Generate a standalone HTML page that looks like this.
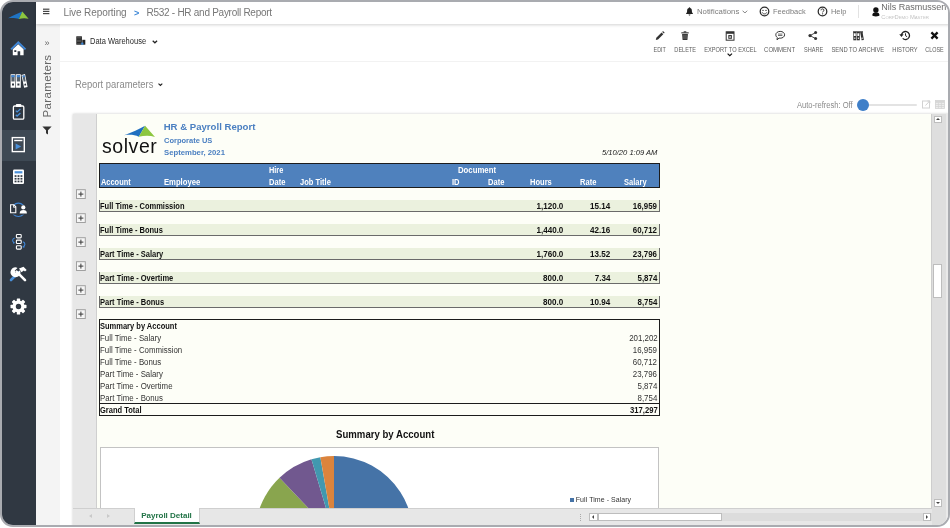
<!DOCTYPE html>
<html lang="en">
<head>
<meta charset="utf-8">
<title>R532 - HR and Payroll Report</title>
<style>
*{box-sizing:border-box;margin:0;padding:0}
html,body{width:950px;height:528px;overflow:hidden;background:#fff}
body{font-family:"Liberation Sans",sans-serif;color:#333;position:relative}
.abs{position:absolute}
#frame{position:absolute;left:0;top:0;width:950px;height:527px;border:2px solid #a9abb0;border-radius:13px;overflow:hidden;background:#fff}
#inner{position:absolute;left:-2px;top:-2px;width:950px;height:528px;will-change:transform}
/* sidebar */
#side{position:absolute;left:0;top:0;width:36px;height:528px;background:#303842}
#side .sel{position:absolute;left:0;top:130px;width:36px;height:31px;background:#3e4954}
#side svg{position:absolute;left:0;top:0}
/* top bar */
#top{position:absolute;left:36px;top:0;width:914px;height:24px;background:#fff;box-shadow:0 1px 3px rgba(0,0,0,.18);z-index:5}
#top .crumb{position:absolute;top:6.200px;font-size:10px;color:#777;white-space:nowrap;line-height:14px}
#params{position:absolute;left:36px;top:24px;width:24px;height:504px;background:#f4f4f4}
#main{position:absolute;left:60px;top:24px;width:890px;height:504px;background:#fff}
.tb{position:absolute;font-size:6.8px;color:#5c5c5c;white-space:nowrap;text-align:center;line-height:8px;top:22px}
.tb span{display:inline-block;transform:scaleX(.825);transform-origin:center center !important}
/* report */
#gutter{position:absolute;left:73px;top:114px;width:24px;height:394px;background:#e7e7e7}
#sheet{position:absolute;left:97px;top:114px;width:834.300px;height:394px;background:#fdfef7;overflow:hidden}
#vscroll{position:absolute;left:931.300px;top:114px;width:17px;height:413px;background:#dedede}
#tabs{position:absolute;left:73px;top:508px;width:859px;height:19px;background:#e7e7e7}
.r{position:absolute;font-size:9px;line-height:12px;white-space:nowrap;color:#111}
.tt{position:absolute;top:7px;font-size:8px;line-height:10px;color:#7c7c7c;white-space:nowrap}
.tt span,.tb span,.r span{display:inline-block;transform-origin:left center}
.r span{white-space:nowrap}
.sbtn{position:absolute;background:#fff;border:1px solid #bdbdbd}
.sbtn i{position:absolute;width:0;height:0;border-style:solid}
</style>
</head>
<body>
<div id="frame"><div id="inner">

<div id="side">
  <div class="sel"></div>
  <svg width="36" height="528" viewBox="0 0 36 528">
    <!-- logo -->
    <path d="M8 18.200C13 15.500 18 13.500 22.300 11.500L18.900 19C15.500 17.800 11.500 17.800 8 18.200z" fill="#1f74c4"/>
    <path d="M22.300 11.500L28.600 18.700C25.500 17.900 22 18 18.900 19z" fill="#8cc63f"/>
    <!-- home -->
    <path d="M10.400 48.700L18.300 41L26.200 48.700L24.900 50L18.300 43.700L11.700 50z" fill="#3f86d6"/>
    <path d="M12.800 49.300L18.200 44.300L23.600 49.300V55.200H20.200V51.300H17.600V55.200H12.800z" fill="#fff"/>
    <rect x="14.300" y="50.200" width="2" height="1.800" fill="#303842"/>
    <!-- binders -->
    <g fill="#fff">
      <rect x="10.600" y="74.200" width="4.800" height="13.600" rx=".4"/>
      <rect x="16" y="74.200" width="4.800" height="13.600" rx=".4"/>
      <path d="M21.500 74.900l3.500-.8 2.600 12.900-3.500.8z"/>
    </g>
    <g fill="#56616c">
      <rect x="11.400" y="75.200" width="3.200" height="6.300"/>
      <rect x="16.800" y="75.200" width="3.200" height="6.300"/>
      <path d="M22.500 75.700l2-.5 1.200 6-2 .5z"/>
    </g>
    <g fill="#303842">
      <rect x="12" y="83.500" width="2" height="2"/>
      <rect x="17.400" y="83.500" width="2" height="2"/>
      <path d="M24.300 83.900l1.600-.4.400 1.800-1.600.4z"/>
    </g>
    <rect x="11.400" y="75.200" width="3.200" height="2" fill="#3f86d6"/>
    <rect x="16.800" y="75.200" width="3.200" height="2" fill="#3f86d6"/>
    <path d="M22.500 75.700l2-.5.400 1.900-2 .5z" fill="#3f86d6"/>
    <!-- clipboard -->
    <rect x="13.400" y="106" width="10.400" height="13.200" rx="1.200" fill="none" stroke="#fff" stroke-width="1.300"/>
    <rect x="15.800" y="104" width="5.600" height="3" rx="1" fill="#fff"/>
    <path d="M15.800 110.600l1.300 1.300 3.300-3M15.800 114.800l1.300 1.300 3.300-3" fill="none" stroke="#4a90d9" stroke-width="1.300"/>
    <!-- report play -->
    <rect x="12.300" y="137.600" width="12" height="14" fill="none" stroke="#fff" stroke-width="1.400"/>
    <rect x="14.200" y="139.800" width="8.200" height="1.400" fill="#fff"/>
    <path d="M15.600 143.500l5.600 3-5.600 3z" fill="#4a90d9"/>
    <!-- calculator -->
    <rect x="13" y="169.500" width="11" height="14.400" rx="1.200" fill="#fff"/>
    <rect x="14.600" y="171.200" width="7.800" height="2.200" fill="#4a90d9"/>
    <g fill="#303842">
      <rect x="14.600" y="175.200" width="1.900" height="1.700"/><rect x="17.550" y="175.200" width="1.900" height="1.700"/><rect x="20.500" y="175.200" width="1.900" height="1.700"/>
      <rect x="14.600" y="177.900" width="1.900" height="1.700"/><rect x="17.550" y="177.900" width="1.900" height="1.700"/><rect x="20.500" y="177.900" width="1.900" height="1.700"/>
      <rect x="14.600" y="180.600" width="1.900" height="1.700"/><rect x="17.550" y="180.600" width="1.900" height="1.700"/><rect x="20.500" y="180.600" width="1.900" height="1.700"/>
    </g>
    <!-- doc + person -->
    <circle cx="18.400" cy="209.800" r="6.700" fill="none" stroke="#3f86d6" stroke-width="1.100"/>
    <rect x="9" y="205" width="8" height="9.600" fill="#303842"/>
    <rect x="18.800" y="205" width="9" height="9.600" fill="#303842"/>
    <path d="M10.600 204.800h3.200l2 2v6h-5.200z" fill="none" stroke="#fff" stroke-width="1.100"/>
    <path d="M13.500 205v2.300h2.300" fill="none" stroke="#fff" stroke-width=".8"/>
    <circle cx="23.300" cy="207.400" r="2.100" fill="#fff"/>
    <path d="M19.700 213.400c0-2.300 1.400-3.300 3.600-3.300s3.600 1 3.600 3.300z" fill="#fff"/>
    <!-- org -->
    <g fill="none" stroke="#fff" stroke-width="1.100">
      <rect x="16.400" y="234.500" width="4.800" height="3.400" rx=".8"/>
      <rect x="16.400" y="240.100" width="4.800" height="3.400" rx=".8"/>
      <rect x="16.400" y="245.700" width="4.800" height="3.400" rx=".8"/>
    </g>
    <path d="M14.800 238c-2.600.6-3 3.600-.6 4.800M22.800 241.800c2.800.8 2.800 4.200 0 5.200" fill="none" stroke="#3f86d6" stroke-width="1.100"/>
    <path d="M13.200 241.500l1.800 1.600-2 .6z" fill="#3f86d6"/>
    <path d="M24.200 245.600l-1.800 1.400 2 .9z" fill="#3f86d6"/>
    <!-- tools -->
    <path d="M11 280l7.500-7.500" stroke="#4a90d9" stroke-width="2.600" stroke-linecap="round"/>
    <path d="M25 280.200l-8.500-8.500" stroke="#fff" stroke-width="2.600" stroke-linecap="round"/>
    <path d="M10.500 270.200c1.200-2.600 4.200-3.600 6.500-2.300l-2.700 2.700.6 1.800 1.800.6 2.700-2.700c1.300 2.300.3 5.300-2.300 6.500-2.700 1.100-5.800-.300-6.800-2.800-.5-1.300-.4-2.600.2-3.800z" fill="#fff" transform="translate(.5 0)"/>
    <path d="M19 268.500l4.500-1.700 3.200 3.200-1.700 1.400-1.200-1-2.300 1.800z" fill="#fff"/>
    <!-- gear -->
    <g transform="translate(18.500 306.500)" fill="#fff">
      <g id="tth"><rect x="-1.700" y="-8" width="3.400" height="16" rx=".6"/></g>
      <rect x="-1.700" y="-8" width="3.400" height="16" rx=".6" transform="rotate(45)"/>
      <rect x="-1.700" y="-8" width="3.400" height="16" rx=".6" transform="rotate(90)"/>
      <rect x="-1.700" y="-8" width="3.400" height="16" rx=".6" transform="rotate(135)"/>
      <circle r="6"/>
      <circle r="2.700" fill="#303842"/>
    </g>
  </svg>
</div>


<div id="top">
  <svg class="abs" style="left:7px;top:8px" width="7" height="7" viewBox="0 0 7 7"><rect x="0" y="0.6" width="6.4" height="1.2" fill="#444"/><rect x="0" y="2.8" width="6.4" height="1.2" fill="#444"/><rect x="0" y="5" width="6.4" height="1.2" fill="#444"/></svg>
  <div class="crumb" style="left:27.5px;letter-spacing:-.1px">Live Reporting</div>
  <div class="crumb" style="left:98px;color:#3b86d6;font-weight:bold;font-size:9px">&gt;</div>
  <div class="crumb" style="left:110.5px;letter-spacing:-.27px">R532 - HR and Payroll Report</div>

  <svg class="abs" style="left:649px;top:7px" width="9" height="9" viewBox="0 0 9 9"><path d="M4.5 0.3c.5 0 .7.3.7.7 1.3.4 1.7 1.500 1.700 2.900 0 1.400.5 2 1.100 2.600v.5h-7v-.5c.6-.6 1.100-1.200 1.100-2.600 0-1.400.4-2.500 1.700-2.900 0-.4.200-.7.700-.7z" fill="#222"/><path d="M3.600 7.500h1.800c0 .6-.4 1-.9 1s-.9-.4-.9-1z" fill="#222"/></svg>
  <div class="tt" style="left:661px"><span style="transform:scaleX(.97)">Notifications</span></div>
  <svg class="abs" style="left:705.600px;top:10.300px" width="6" height="4" viewBox="0 0 6 4"><path d="M.6.700l2.300 2.300 2.300-2.300" fill="none" stroke="#777" stroke-width=".9"/></svg>

  <svg class="abs" style="left:723.300px;top:6px" width="11" height="11" viewBox="0 0 11 11"><circle cx="5.500" cy="5.500" r="4.300" fill="none" stroke="#2a2a2a" stroke-width="1.250"/><circle cx="4" cy="4.400" r=".7" fill="#333"/><circle cx="7" cy="4.400" r=".7" fill="#333"/><path d="M3.200 6.400c.5 1.100 1.300 1.500 2.300 1.500s1.800-.4 2.300-1.500" fill="none" stroke="#333" stroke-width=".9"/></svg>
  <div class="tt" style="left:737px"><span style="transform:scaleX(.93)">Feedback</span></div>

  <svg class="abs" style="left:780.500px;top:6px" width="11" height="11" viewBox="0 0 11 11"><circle cx="5.500" cy="5.500" r="4.300" fill="none" stroke="#2a2a2a" stroke-width="1.250"/><path d="M4 4.300c0-.9.700-1.400 1.500-1.400s1.500.5 1.500 1.300c0 1-1.400 1.100-1.400 2.200" fill="none" stroke="#333" stroke-width="1"/><circle cx="5.600" cy="7.800" r=".65" fill="#333"/></svg>
  <div class="tt" style="left:794.600px"><span style="transform:scaleX(.93)">Help</span></div>

  <div class="abs" style="left:821.500px;top:5px;width:1px;height:13px;background:#e2e2e2"></div>

  <svg class="abs" style="left:836px;top:6.500px" width="8" height="10" viewBox="0 0 8 10"><circle cx="3.900" cy="3" r="2.700" fill="#111"/><path d="M.3 8.300c0-2 1.300-3 3.600-3s3.600 1 3.600 3c0 .7-1.600 1.100-3.600 1.100s-3.600-.4-3.600-1.100z" fill="#111"/></svg>
  <div class="abs" style="left:845.300px;top:2.300px;font-size:9px;line-height:11px;color:#6a6a6a;white-space:nowrap">Nils Rasmussen</div>
  <div class="abs" style="left:845.300px;top:13.500px;font-size:5.800px;line-height:7px;color:#c4c4c4;white-space:nowrap;letter-spacing:-.1px">C<span style="font-size:4.400px">ORP</span>D<span style="font-size:4.400px">EMO</span> M<span style="font-size:4.400px">ASTER</span></div>
</div>

<div id="params">
  <div class="abs" style="left:8.500px;top:14px;font-size:9px;line-height:10px;color:#666">&raquo;</div>
  <div class="abs" style="left:-21px;top:55px;width:64px;height:14px;transform:rotate(-90deg);transform-origin:center;font-size:11.500px;line-height:14px;letter-spacing:.35px;color:#666;white-space:nowrap;text-align:center">Parameters</div>
  <svg class="abs" style="left:5.800px;top:101.600px" width="10" height="9.200" viewBox="0 0 11 10"><path d="M.4.400h10.200l-4 4.300v4.700l-2.200-1.500v-3.200z" fill="#333"/></svg>
</div>
<div id="main">
  <!-- data warehouse -->
  <svg class="abs" style="left:16.200px;top:12px" width="10" height="9" viewBox="0 0 10 9"><rect x=".3" y=".3" width="5.600" height="8.400" fill="#222"/><g fill="#777"><rect x="1" y="1.300" width="4.200" height=".5"/><rect x="1" y="2.700" width="4.200" height=".5"/><rect x="1" y="4.100" width="4.200" height=".5"/><rect x="1" y="5.500" width="4.200" height=".5"/><rect x="1" y="6.900" width="4.200" height=".5"/></g><rect x="6.300" y="3.800" width="3" height="4.900" fill="#222"/><rect x="5.200" y="6.600" width="2.200" height="2.100" fill="#3b86d6"/></svg>
  <div class="abs" style="left:30px;top:12.400px;font-size:8.300px;line-height:10px;color:#2b2b2b;white-space:nowrap"><span style="display:inline-block;transform:scaleX(.905);transform-origin:left">Data Warehouse</span></div>
  <svg class="abs" style="left:92px;top:15.700px" width="6" height="4" viewBox="0 0 6 4"><path d="M.7.700l2.200 2.100 2.200-2.100" fill="none" stroke="#222" stroke-width="1.200"/></svg>

  <!-- toolbar icons -->
  <svg class="abs" style="left:594px;top:6px" width="292" height="12" viewBox="0 0 292 12">
    <!-- edit (center 660 => 6) -->
    <path d="M2.300 9.700l.5-2.200 5.300-5.300 1.700 1.700-5.300 5.300zM8.700 1.600l.8-.8 1.700 1.700-.8.8z" fill="#333" transform="translate(-.5 .3)"/>
    <!-- delete (center 685 => 31) -->
    <g fill="#333"><rect x="27.300" y="2.300" width="7.400" height="1.100"/><rect x="29.700" y="1.300" width="2.600" height="1.200"/><path d="M28.100 3.900h5.800l-.5 6.200h-4.800z"/></g>
    <g fill="#999"><rect x="29.700" y="4.800" width=".6" height="4.300"/><rect x="31.700" y="4.800" width=".6" height="4.300"/></g>
    <!-- export (center 730 => 76) -->
    <rect x="72.200" y="1.800" width="7.800" height="8.400" fill="none" stroke="#333" stroke-width="1"/>
    <rect x="72.200" y="1.800" width="7.800" height="2" fill="#333"/>
    <rect x="74.300" y="5" width="3.600" height="3.800" fill="#333"/>
    <path d="M75.200 5.800l1.800 2.200m0-2.200l-1.800 2.200" stroke="#fff" stroke-width=".6"/>
    <!-- comment (center 780 => 126) -->
    <path d="M126.200 1.400c2.500 0 4.400 1.500 4.400 3.400s-1.900 3.400-4.400 3.400c-.4 0-.8 0-1.100-.1l-2.100 1.700.3-2.300c-.9-.6-1.500-1.600-1.500-2.700 0-1.900 1.900-3.400 4.400-3.400z" fill="none" stroke="#333" stroke-width="1"/>
    <rect x="124" y="3.700" width="4.400" height=".7" fill="#333"/><rect x="124" y="5.200" width="4.400" height=".7" fill="#333"/>
    <!-- share (center 813 => 219-? ) 813-594=219 -->
<g transform="translate(-60 0)">
    <g fill="#333"><circle cx="216" cy="5.600" r="1.600"/><circle cx="221.600" cy="2.600" r="1.500"/><circle cx="221.600" cy="8.600" r="1.500"/></g>
    <path d="M221.600 2.600l-5.600 3 5.600 3" fill="none" stroke="#333" stroke-width=".9"/>
    <!-- archive (center 858 => 264) -->
    <g fill="#333"><rect x="259.300" y="2" width="3" height="8.300"/><rect x="262.800" y="2" width="3" height="8.300"/><path d="M266.200 2.300l2.300-.4 1.400 8-2.300.4z"/><rect x="259" y="1.300" width="10" height="1.200"/></g>
    <g fill="#fff"><rect x="259.900" y="3.300" width="1.800" height="2.700"/><rect x="263.400" y="3.300" width="1.800" height="2.700"/><rect x="260.200" y="7.600" width="1.200" height="1.200"/><rect x="263.800" y="7.600" width="1.200" height="1.200"/><path d="M267.500 7.800l1-.2.200 1.100-1 .2z"/></g>
  </g>
  </svg>
  <!-- history -->
  <svg class="abs" style="left:838.500px;top:6px" width="12" height="11" viewBox="0 0 12 11"><path d="M2.500 5.500a4 4 0 1 1 1.200 2.900" fill="none" stroke="#222" stroke-width="1.300"/><path d="M.3 4.300h4.300l-2.100 2.600z" fill="#222"/><path d="M6.500 3.300v2.400l1.600 1" fill="none" stroke="#222" stroke-width="1"/></svg>
  <!-- close -->
  <svg class="abs" style="left:870.200px;top:6.800px" width="9" height="9" viewBox="0 0 9 9"><path d="M1.400 1.400l6.200 6.200M7.600 1.400l-6.200 6.200" stroke="#111" stroke-width="2.300"/></svg>

  <div class="tb" style="left:586px;width:28px"><span style="transform:scaleX(0.8)">EDIT</span></div>
  <div class="tb" style="left:605px;width:40px"><span style="transform:scaleX(0.823)">DELETE</span></div>
  <div class="tb" style="left:635px;width:70px"><span style="transform:scaleX(0.833)">EXPORT TO EXCEL</span></div>
  <div class="tb" style="left:695px;width:50px"><span style="transform:scaleX(0.883)">COMMENT</span></div>
  <div class="tb" style="left:733.400px;width:40px"><span style="transform:scaleX(0.82)">SHARE</span></div>
  <div class="tb" style="left:762.600px;width:70px"><span style="transform:scaleX(0.856)">SEND TO ARCHIVE</span></div>
  <div class="tb" style="left:824.600px;width:40px"><span style="transform:scaleX(0.847)">HISTORY</span></div>
  <div class="tb" style="left:854.300px;width:40px"><span style="transform:scaleX(0.8)">CLOSE</span></div>
  <svg class="abs" style="left:667.300px;top:29px" width="6" height="4" viewBox="0 0 6 4"><path d="M.6.600l2.200 2.100 2.200-2.100" fill="none" stroke="#111" stroke-width="1.200"/></svg>
  <div class="abs" style="left:0;top:36.500px;width:890px;height:1px;background:#f2f2f2"></div>

  <!-- report parameters -->
  <div class="abs" style="left:14.800px;top:55.200px;font-size:10px;line-height:12px;color:#8a8a8a;white-space:nowrap"><span style="display:inline-block;transform:scaleX(.94);transform-origin:left">Report parameters</span></div>
  <svg class="abs" style="left:98px;top:59.300px" width="5" height="4" viewBox="0 0 5 4"><path d="M.5.600l1.900 1.900 1.900-1.900" fill="none" stroke="#222" stroke-width="1.100"/></svg>

  <!-- auto refresh -->
  <div class="abs" style="left:737.400px;top:76.200px;font-size:8.300px;line-height:10px;color:#8a8a8a;white-space:nowrap"><span style="display:inline-block;transform:scaleX(.91);transform-origin:left">Auto-refresh: Off</span></div>
  <div class="abs" style="left:806px;top:79.700px;width:51px;height:2px;background:#e3e3e3;border-radius:1px"></div>
  <div class="abs" style="left:797.300px;top:74.800px;width:11.800px;height:11.800px;border-radius:50%;background:#3f7fc8"></div>
  <svg class="abs" style="left:862px;top:75.800px" width="9" height="9" viewBox="0 0 9 9"><rect x=".5" y="1" width="7" height="7" fill="none" stroke="#d2d2d2" stroke-width="1"/><path d="M3.500 5.500l4-4.300M5.500 1h2.300v2.300" fill="none" stroke="#d2d2d2" stroke-width="1"/></svg>
  <svg class="abs" style="left:874.500px;top:76px" width="10" height="9" viewBox="0 0 10 9"><rect x=".4" y=".4" width="9" height="8" fill="#ececec" stroke="#d2d2d2" stroke-width=".8"/><path d="M.4 2.500h9M.4 4.500h9M.4 6.500h9M3.400 2.500v6M6.400 2.500v6" stroke="#d2d2d2" stroke-width=".7"/><rect x=".4" y=".4" width="9" height="2" fill="#d6d6d6"/></svg>
</div>

<div class="abs" style="left:73px;top:114px;width:877px;height:414px;box-shadow:0 0 2.500px rgba(0,0,0,.22)"></div>
<div id="gutter">
  <svg class="abs" style="left:0;top:0" width="24" height="394" viewBox="73 114 24 394">
    <rect x="76.500" y="189.7" width="8.800" height="8.800" fill="#f6f6f6" stroke="#a0a0a0" stroke-width="1"/><path d="M78.400 194.1h5M80.900 191.6v5" stroke="#3a3a3a" stroke-width="1"/>
    <rect x="76.500" y="213.7" width="8.800" height="8.800" fill="#f6f6f6" stroke="#a0a0a0" stroke-width="1"/><path d="M78.400 218.1h5M80.900 215.6v5" stroke="#3a3a3a" stroke-width="1"/>
    <rect x="76.500" y="237.7" width="8.800" height="8.800" fill="#f6f6f6" stroke="#a0a0a0" stroke-width="1"/><path d="M78.400 242.1h5M80.900 239.6v5" stroke="#3a3a3a" stroke-width="1"/>
    <rect x="76.500" y="261.7" width="8.800" height="8.800" fill="#f6f6f6" stroke="#a0a0a0" stroke-width="1"/><path d="M78.400 266.1h5M80.900 263.6v5" stroke="#3a3a3a" stroke-width="1"/>
    <rect x="76.500" y="285.7" width="8.800" height="8.800" fill="#f6f6f6" stroke="#a0a0a0" stroke-width="1"/><path d="M78.400 290.1h5M80.900 287.6v5" stroke="#3a3a3a" stroke-width="1"/>
    <rect x="76.500" y="309.7" width="8.800" height="8.800" fill="#f6f6f6" stroke="#a0a0a0" stroke-width="1"/><path d="M78.400 314.1h5M80.900 311.6v5" stroke="#3a3a3a" stroke-width="1"/>
  </svg>
  <div class="abs" style="right:0;top:0;width:1px;height:394px;background:#cfcfcf"></div>
</div>
<div id="sheet">
<svg class="abs" style="left:26px;top:10px" width="36" height="14" viewBox="123 124 36 14"><path d="M124.200 135.200C132 132.300 139 129.200 145.100 125.700L138.800 136.800C134.500 134.600 129.500 134.400 124.200 135.200z" fill="#1f6fc0"/><path d="M145.100 125.700L155 136.900C150 135.500 144.500 135.500 138.800 136.800z" fill="#8cc63f"/></svg>
<div class="abs" style="left:5.0px;top:20.55px;font-size:19.500px;line-height:22px;letter-spacing:.55px;color:#111;white-space:nowrap">solver</div>
<div class="r" style="top:7.37px;font-size:9.6px;color:#4a7fc1;font-weight:bold;left:66.70px;"><span>HR &amp; Payroll Report</span></div>
<div class="r" style="top:20.73px;font-size:8px;color:#4a7fc1;font-weight:bold;left:66.70px;"><span style="transform:scaleX(0.937);transform-origin:left center">Corporate US</span></div>
<div class="r" style="top:32.73px;font-size:8px;color:#4a7fc1;font-weight:bold;left:66.70px;"><span style="transform:scaleX(0.965);transform-origin:left center">September, 2021</span></div>
<div class="r" style="top:33.13px;font-size:8px;color:#222;font-style:italic;right:273.50px;"><span style="transform:scaleX(0.95);transform-origin:right center">5/10/20 1:09 AM</span></div>
<div class="abs" style="left:2px;top:49px;width:561px;height:25.30000000000001px;background:#4f81bd;border:1.5px solid #1c1c1c"></div>
<div class="r" style="top:50.86px;font-size:8.2px;color:#fff;font-weight:bold;left:171.60px;"><span style="transform:scaleX(0.9);transform-origin:left center">Hire</span></div>
<div class="r" style="top:50.86px;font-size:8.2px;color:#fff;font-weight:bold;left:360.70px;"><span style="transform:scaleX(0.95);transform-origin:left center">Document</span></div>
<div class="r" style="top:62.76px;font-size:8.2px;color:#fff;font-weight:bold;left:4.20px;"><span style="transform:scaleX(0.906);transform-origin:left center">Account</span></div>
<div class="r" style="top:62.76px;font-size:8.2px;color:#fff;font-weight:bold;left:66.70px;"><span style="transform:scaleX(0.937);transform-origin:left center">Employee</span></div>
<div class="r" style="top:62.76px;font-size:8.2px;color:#fff;font-weight:bold;left:171.60px;"><span style="transform:scaleX(0.92);transform-origin:left center">Date</span></div>
<div class="r" style="top:62.76px;font-size:8.2px;color:#fff;font-weight:bold;left:202.60px;"><span style="transform:scaleX(0.92);transform-origin:left center">Job Title</span></div>
<div class="r" style="top:62.76px;font-size:8.2px;color:#fff;font-weight:bold;left:355.30px;"><span style="transform:scaleX(0.92);transform-origin:left center">ID</span></div>
<div class="r" style="top:62.76px;font-size:8.2px;color:#fff;font-weight:bold;left:391.40px;"><span style="transform:scaleX(0.92);transform-origin:left center">Date</span></div>
<div class="r" style="top:62.76px;font-size:8.2px;color:#fff;font-weight:bold;left:433.00px;"><span style="transform:scaleX(0.92);transform-origin:left center">Hours</span></div>
<div class="r" style="top:62.76px;font-size:8.2px;color:#fff;font-weight:bold;left:483.00px;"><span style="transform:scaleX(0.92);transform-origin:left center">Rate</span></div>
<div class="r" style="top:62.76px;font-size:8.2px;color:#fff;font-weight:bold;left:527.00px;"><span style="transform:scaleX(0.92);transform-origin:left center">Salary</span></div>
<div class="abs" style="left:2px;top:86px;width:561px;height:12px;background:#ebf1de;border:1px solid #6a6a6a;border-top:none"></div>
<div class="r" style="top:86.15px;font-size:8.5px;color:#111;font-weight:bold;left:3.20px;"><span style="transform:scaleX(0.883);transform-origin:left center">Full Time - Commission</span></div>
<div class="r" style="top:86.15px;font-size:8.5px;color:#111;font-weight:bold;right:367.90px;"><span style="transform:scaleX(0.95);transform-origin:right center">1,120.0</span></div>
<div class="r" style="top:86.15px;font-size:8.5px;color:#111;font-weight:bold;right:320.90px;"><span style="transform:scaleX(0.95);transform-origin:right center">15.14</span></div>
<div class="r" style="top:86.15px;font-size:8.5px;color:#111;font-weight:bold;right:274.00px;"><span style="transform:scaleX(0.93);transform-origin:right center">16,959</span></div>
<div class="abs" style="left:2px;top:110px;width:561px;height:12px;background:#ebf1de;border:1px solid #6a6a6a;border-top:none"></div>
<div class="r" style="top:110.15px;font-size:8.5px;color:#111;font-weight:bold;left:3.20px;"><span style="transform:scaleX(0.883);transform-origin:left center">Full Time - Bonus</span></div>
<div class="r" style="top:110.15px;font-size:8.5px;color:#111;font-weight:bold;right:367.90px;"><span style="transform:scaleX(0.95);transform-origin:right center">1,440.0</span></div>
<div class="r" style="top:110.15px;font-size:8.5px;color:#111;font-weight:bold;right:320.90px;"><span style="transform:scaleX(0.95);transform-origin:right center">42.16</span></div>
<div class="r" style="top:110.15px;font-size:8.5px;color:#111;font-weight:bold;right:274.00px;"><span style="transform:scaleX(0.93);transform-origin:right center">60,712</span></div>
<div class="abs" style="left:2px;top:134px;width:561px;height:12px;background:#ebf1de;border:1px solid #6a6a6a;border-top:none"></div>
<div class="r" style="top:134.15px;font-size:8.5px;color:#111;font-weight:bold;left:3.20px;"><span style="transform:scaleX(0.883);transform-origin:left center">Part Time - Salary</span></div>
<div class="r" style="top:134.15px;font-size:8.5px;color:#111;font-weight:bold;right:367.90px;"><span style="transform:scaleX(0.95);transform-origin:right center">1,760.0</span></div>
<div class="r" style="top:134.15px;font-size:8.5px;color:#111;font-weight:bold;right:320.90px;"><span style="transform:scaleX(0.95);transform-origin:right center">13.52</span></div>
<div class="r" style="top:134.15px;font-size:8.5px;color:#111;font-weight:bold;right:274.00px;"><span style="transform:scaleX(0.93);transform-origin:right center">23,796</span></div>
<div class="abs" style="left:2px;top:158px;width:561px;height:12px;background:#ebf1de;border:1px solid #6a6a6a;border-top:none"></div>
<div class="r" style="top:158.15px;font-size:8.5px;color:#111;font-weight:bold;left:3.20px;"><span style="transform:scaleX(0.883);transform-origin:left center">Part Time - Overtime</span></div>
<div class="r" style="top:158.15px;font-size:8.5px;color:#111;font-weight:bold;right:367.90px;"><span style="transform:scaleX(0.95);transform-origin:right center">800.0</span></div>
<div class="r" style="top:158.15px;font-size:8.5px;color:#111;font-weight:bold;right:320.90px;"><span style="transform:scaleX(0.95);transform-origin:right center">7.34</span></div>
<div class="r" style="top:158.15px;font-size:8.5px;color:#111;font-weight:bold;right:274.00px;"><span style="transform:scaleX(0.93);transform-origin:right center">5,874</span></div>
<div class="abs" style="left:2px;top:182px;width:561px;height:12px;background:#ebf1de;border:1px solid #6a6a6a;border-top:none"></div>
<div class="r" style="top:182.15px;font-size:8.5px;color:#111;font-weight:bold;left:3.20px;"><span style="transform:scaleX(0.883);transform-origin:left center">Part Time - Bonus</span></div>
<div class="r" style="top:182.15px;font-size:8.5px;color:#111;font-weight:bold;right:367.90px;"><span style="transform:scaleX(0.95);transform-origin:right center">800.0</span></div>
<div class="r" style="top:182.15px;font-size:8.5px;color:#111;font-weight:bold;right:320.90px;"><span style="transform:scaleX(0.95);transform-origin:right center">10.94</span></div>
<div class="r" style="top:182.15px;font-size:8.5px;color:#111;font-weight:bold;right:274.00px;"><span style="transform:scaleX(0.93);transform-origin:right center">8,754</span></div>
<div class="abs" style="left:1.7000000000000028px;top:204.7px;width:561.5px;height:97.5px;border:1.5px solid #1c1c1c"></div>
<div class="abs" style="left:2px;top:289px;width:561px;height:1px;background:#1c1c1c"></div>
<div class="r" style="top:206.45px;font-size:8.5px;color:#111;font-weight:bold;left:3.20px;"><span style="transform:scaleX(0.883);transform-origin:left center">Summary by Account</span></div>
<div class="r" style="top:218.45px;font-size:8.5px;color:#333;left:3.20px;"><span style="transform:scaleX(0.925);transform-origin:left center">Full Time - Salary</span></div>
<div class="r" style="top:218.45px;font-size:8.5px;color:#333;right:274.00px;"><span style="transform:scaleX(0.93);transform-origin:right center">201,202</span></div>
<div class="r" style="top:230.45px;font-size:8.5px;color:#333;left:3.20px;"><span style="transform:scaleX(0.925);transform-origin:left center">Full Time - Commission</span></div>
<div class="r" style="top:230.45px;font-size:8.5px;color:#333;right:274.00px;"><span style="transform:scaleX(0.93);transform-origin:right center">16,959</span></div>
<div class="r" style="top:242.45px;font-size:8.5px;color:#333;left:3.20px;"><span style="transform:scaleX(0.925);transform-origin:left center">Full Time - Bonus</span></div>
<div class="r" style="top:242.45px;font-size:8.5px;color:#333;right:274.00px;"><span style="transform:scaleX(0.93);transform-origin:right center">60,712</span></div>
<div class="r" style="top:254.45px;font-size:8.5px;color:#333;left:3.20px;"><span style="transform:scaleX(0.925);transform-origin:left center">Part Time - Salary</span></div>
<div class="r" style="top:254.45px;font-size:8.5px;color:#333;right:274.00px;"><span style="transform:scaleX(0.93);transform-origin:right center">23,796</span></div>
<div class="r" style="top:266.45px;font-size:8.5px;color:#333;left:3.20px;"><span style="transform:scaleX(0.925);transform-origin:left center">Part Time - Overtime</span></div>
<div class="r" style="top:266.45px;font-size:8.5px;color:#333;right:274.00px;"><span style="transform:scaleX(0.93);transform-origin:right center">5,874</span></div>
<div class="r" style="top:278.45px;font-size:8.5px;color:#333;left:3.20px;"><span style="transform:scaleX(0.925);transform-origin:left center">Part Time - Bonus</span></div>
<div class="r" style="top:278.45px;font-size:8.5px;color:#333;right:274.00px;"><span style="transform:scaleX(0.93);transform-origin:right center">8,754</span></div>
<div class="r" style="top:290.15px;font-size:8.5px;color:#111;font-weight:bold;left:3.20px;"><span style="transform:scaleX(0.883);transform-origin:left center">Grand Total</span></div>
<div class="r" style="top:290.15px;font-size:8.5px;color:#111;font-weight:bold;right:274.00px;"><span style="transform:scaleX(0.9);transform-origin:right center">317,297</span></div>
<div class="r" style="top:315.44px;font-size:10px;color:#111;font-weight:bold;left:138.00px;width:300px;text-align:center;"><span style="transform:scaleX(0.96);transform-origin:center center">Summary by Account</span></div>
<div class="abs" style="left:2.5px;top:333px;width:559.5px;height:80px;background:#fff;border:1px solid #c3c3c3"></div>
<svg class="abs" style="left:143px;top:334px" width="190" height="60" viewBox="240 448 190 60"><path d="M334 535L334.00 456.00A79 79 0 1 1 275.03 587.57Z" fill="#4573a7"/><path d="M334 535L275.03 587.57A79 79 0 0 1 261.00 565.20Z" fill="#aa4644"/><path d="M334 535L261.00 565.20A79 79 0 0 1 279.52 477.79Z" fill="#89a54e"/><path d="M334 535L279.52 477.79A79 79 0 0 1 311.43 459.29Z" fill="#71588f"/><path d="M334 535L311.43 459.29A79 79 0 0 1 320.37 457.18Z" fill="#4198af"/><path d="M334 535L320.37 457.18A79 79 0 0 1 334.00 456.00Z" fill="#db843d"/></svg>
<div class="abs" style="left:472.9px;top:383.7px;width:4px;height:4px;background:#4573a7"></div>
<div class="r" style="top:380.47px;font-size:7px;color:#333;letter-spacing:0.05px;left:478.80px;"><span>Full Time - Salary</span></div>
</div>
<div id="vscroll">
  <div class="abs" style="left:0;top:0;width:1px;height:394px;background:#cdcdcd"></div>
  <div class="abs" style="left:14.800px;top:0;width:2.200px;height:413px;background:#e9e9e9"></div>
  <div class="sbtn" style="left:2.500px;top:1.600px;width:8px;height:7.500px"><i style="border-width:0 2px 2.500px 2px;border-color:transparent transparent #444 transparent;left:1px;top:1.500px"></i></div>
  <div class="sbtn" style="left:2.100px;top:150px;width:8.800px;height:34px"></div>
  <div class="sbtn" style="left:2.800px;top:385px;width:8px;height:8px"><i style="border-width:2.500px 2px 0 2px;border-color:#444 transparent transparent transparent;left:1px;top:2px"></i></div>
</div>
<div id="tabs">
  <div class="abs" style="left:0;top:0;width:859px;height:1px;background:#cfcfcf"></div>
  <div class="abs" style="left:16px;top:6px;width:0;height:0;border-style:solid;border-width:2.500px 3px 2.500px 0;border-color:transparent #c9c9c9 transparent transparent"></div>
  <div class="abs" style="left:33.500px;top:6px;width:0;height:0;border-style:solid;border-width:2.500px 0 2.500px 3px;border-color:transparent transparent transparent #c9c9c9"></div>
  <div class="abs" style="left:60.500px;top:0;width:66px;height:15.500px;background:#fff;border-left:1px solid #cfcfcf;border-right:1px solid #cfcfcf;border-bottom:2px solid #217346"></div>
  <div class="abs" style="left:60.500px;top:3px;width:66px;text-align:center;font-size:8px;line-height:10px;font-weight:bold;color:#217346;white-space:nowrap">Payroll Detail</div>
  <div class="abs" style="left:506.500px;top:6px;width:1px;height:1px;background:#aaa;box-shadow:0 2px 0 #aaa,0 4px 0 #aaa,0 6px 0 #aaa"></div>
  <div class="abs" style="left:515.500px;top:4.500px;width:343.500px;height:8.500px;background:#dcdcdc"></div>
  <div class="sbtn" style="left:515.800px;top:4.700px;width:9px;height:8px"><i style="border-width:2px 2.500px 2px 0;border-color:transparent #444 transparent transparent;left:2px;top:1.300px"></i></div>
  <div class="sbtn" style="left:524.500px;top:4.700px;width:124.500px;height:8px"></div>
  <div class="sbtn" style="left:849.600px;top:4.600px;width:8.800px;height:8.400px"><i style="border-width:2px 0 2px 2.500px;border-color:transparent transparent transparent #444;left:2.500px;top:1.500px"></i></div>
</div>

</div></div>
</body>
</html>
